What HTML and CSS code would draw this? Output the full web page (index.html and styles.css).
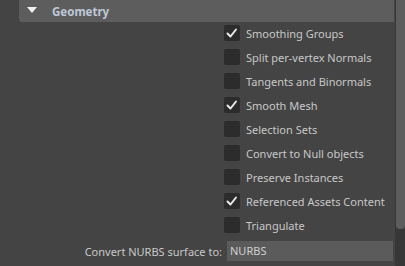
FILE: index.html
```html
<!DOCTYPE html>
<html>
<head>
<meta charset="utf-8">
<link rel="stylesheet" href="styles.css">
</head>
<body>
<div class="panel">
  <div class="content">
    <div class="header">
      <span class="tri"></span>
      <span class="title">Geometry</span>
    </div>
    <div class="rows">
      <div class="row"><span class="cb on"><svg viewBox="0 0 16 16"><path d="M3.5 8.5 L6.5 11.5 L12 4.5" /></svg></span><span class="lbl">Smoothing Groups</span></div>
      <div class="row"><span class="cb"></span><span class="lbl">Split per-vertex Normals</span></div>
      <div class="row"><span class="cb"></span><span class="lbl">Tangents and Binormals</span></div>
      <div class="row"><span class="cb on"><svg viewBox="0 0 16 16"><path d="M3.5 8.5 L6.5 11.5 L12 4.5" /></svg></span><span class="lbl">Smooth Mesh</span></div>
      <div class="row"><span class="cb"></span><span class="lbl">Selection Sets</span></div>
      <div class="row"><span class="cb"></span><span class="lbl">Convert to Null objects</span></div>
      <div class="row"><span class="cb"></span><span class="lbl">Preserve Instances</span></div>
      <div class="row"><span class="cb on"><svg viewBox="0 0 16 16"><path d="M3.5 8.5 L6.5 11.5 L12 4.5" /></svg></span><span class="lbl">Referenced Assets Content</span></div>
      <div class="row"><span class="cb"></span><span class="lbl">Triangulate</span></div>
    </div>
    <div class="field-row">
      <span class="field-lbl">Convert NURBS surface to:</span>
      <span class="field">NURBS</span>
    </div>
  </div>
  <div class="scrollbar"><div class="thumb"></div></div>
</div>
</body>
</html>
```
FILE: styles.css
```css
html, body {
  margin: 0;
  padding: 0;
  background: #444444;
  width: 405px;
  height: 266px;
  overflow: hidden;
  font-family: "Noto Sans", "DejaVu Sans", sans-serif;
  font-size: 11px;
  color: #c8c8c8;
}
.panel {
  display: flex;
  height: 266px;
}
.content {
  flex: 1;
  display: flex;
  flex-direction: column;
}
.header {
  margin-left: 19px;
  height: 22px;
  background: #5d5d5d;
  border-bottom-left-radius: 3px;
  display: flex;
  align-items: center;
}
.tri {
  width: 0;
  height: 0;
  margin-left: 8px;
  border-left: 5px solid transparent;
  border-right: 5px solid transparent;
  border-top: 6px solid #f0f0f0;
  margin-top: -3px;
}
.title {
  margin-left: 15px;
  font-weight: bold;
  color: #bfc8d8;
  font-size: 11.5px;
}
.rows {
  margin-top: 3px;
  padding-left: 224px;
  display: flex;
  flex-direction: column;
}
.row {
  height: 24px;
  display: flex;
  align-items: flex-start;
  gap: 6px;
}
.cb {
  width: 16px;
  height: 16px;
  background: #2c2c2c;
  border-radius: 2px;
  display: flex;
  align-items: center;
  justify-content: center;
}
.cb svg {
  width: 16px;
  height: 16px;
}
.cb svg path {
  fill: none;
  stroke: #e8e8e8;
  stroke-width: 2;
  stroke-linecap: round;
  stroke-linejoin: round;
}
.lbl {
  line-height: 17px;
}
.field-row {
  display: flex;
  align-items: center;
  height: 20px;
}
.field-lbl {
  width: 222px;
  text-align: right;
}
.field {
  margin-left: 5px;
  width: 163px;
  height: 20px;
  line-height: 20px;
  background: #5b5b5b;
  padding-left: 3px;
  color: #d0d0d0;
}
.scrollbar {
  width: 10px;
  margin-left: 1px;
  background: #373737;
}
.thumb {
  height: 229px;
  margin-left: 1px;
  background: #5d5d5d;
  border-bottom-left-radius: 4px;
  border-bottom-right-radius: 4px;
}
```
